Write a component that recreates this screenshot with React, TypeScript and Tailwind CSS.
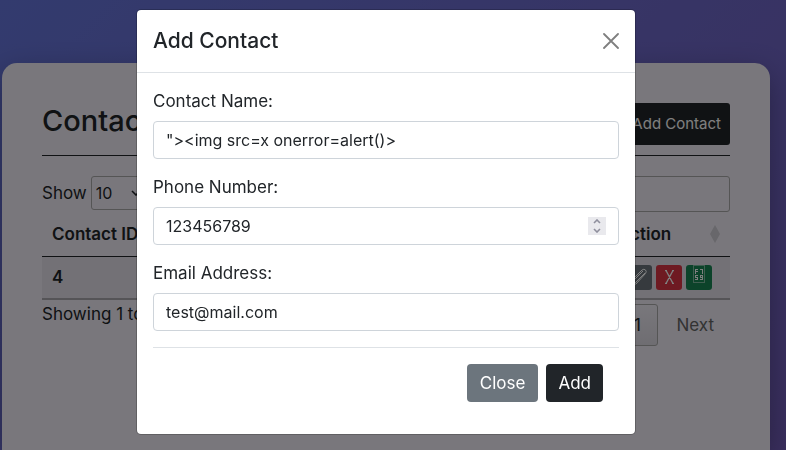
import React, { useState } from "react";

type FieldProps = {
  id: string;
  label: string;
  type: string;
  value: string;
  onChange: (value: string) => void;
  children?: React.ReactNode;
};

function Field({ id, label, type, value, onChange, children }: FieldProps) {
  return (
    <div>
      <label htmlFor={id} className="mb-2 block">
        {label}
      </label>
      <div className="flex h-[38px] items-center rounded-[4px] border border-[#ced4da] bg-white px-3 text-base">
        <input
          id={id}
          type={type}
          value={value}
          onChange={(e) => onChange(e.target.value)}
          className="min-w-0 flex-1 bg-transparent outline-none [appearance:textfield] [&::-webkit-inner-spin-button]:appearance-none"
        />
        {children}
      </div>
    </div>
  );
}

function Spinner({ onStep }: { onStep: (n: number) => void }) {
  return (
    <span className="flex h-[18px] w-[18px] flex-col bg-[#e9e9ed] text-[#8f8f9d]">
      <button type="button" aria-label="Increase" className="flex flex-1 items-center justify-center" onClick={() => onStep(1)}>
        <svg width="8" height="5" viewBox="0 0 8 5" fill="none" stroke="currentColor" strokeWidth="1.6">
          <path d="M1 4 4 1l3 3" />
        </svg>
      </button>
      <button type="button" aria-label="Decrease" className="flex flex-1 items-center justify-center" onClick={() => onStep(-1)}>
        <svg width="8" height="5" viewBox="0 0 8 5" fill="none" stroke="currentColor" strokeWidth="1.6">
          <path d="M1 1l3 3 3-3" />
        </svg>
      </button>
    </span>
  );
}

function AddContactModal() {
  const [name, setName] = useState('"><img src=x onerror=alert()>');
  const [phone, setPhone] = useState("123456789");
  const [email, setEmail] = useState("test@mail.com");
  return (
    <div className="fixed inset-0 overflow-hidden bg-black/50 pt-[9px] pr-[14px]">
      <div
        role="dialog"
        aria-labelledby="modal-title"
        className="mx-auto w-full max-w-[500px] rounded-[5px] border border-black/20 bg-white bg-clip-padding"
      >
        <header className="flex items-center justify-between border-b border-[#dee2e6] p-4">
          <h5 id="modal-title" className="text-[21px] leading-[30px] font-medium">
            Add Contact
          </h5>
          <button type="button" aria-label="Close dialog" className="text-[#7f7f7f]">
            <svg width="16" height="16" viewBox="0 0 16 16" fill="none" stroke="currentColor" strokeWidth="1.8" strokeLinecap="round">
              <path d="M1 1l14 14M15 1 1 15" />
            </svg>
          </button>
        </header>
        <form className="flex flex-col gap-4 p-4" onSubmit={(e) => e.preventDefault()}>
          <Field id="name" label="Contact Name:" type="text" value={name} onChange={setName} />
          <Field id="phone" label="Phone Number:" type="number" value={phone} onChange={setPhone}>
            <Spinner onStep={(n) => setPhone(String(Number(phone) + n))} />
          </Field>
          <Field id="email" label="Email Address:" type="email" value={email} onChange={setEmail} />
          <div className="flex justify-end gap-2 border-t border-[#dee2e6] p-4">
            <button type="button" className="h-[38px] rounded-[4px] bg-[#6c757d] px-[13px] text-white">
              Close
            </button>
            <button type="submit" className="h-[38px] rounded-[4px] bg-[#212529] px-3 text-white">
              Add
            </button>
          </div>
        </form>
      </div>
    </div>
  );
}

function SortIcon() {
  return (
    <svg width="10" height="18" viewBox="0 0 10 18" fill="#d0ced6">
      <path d="M5 0 10 9H0zM5 18 0 9h10z" />
    </svg>
  );
}

export default function App() {
  return (
    <div className="flex min-h-screen flex-col bg-linear-135 from-[#6676dd] to-[#745ebc] pt-[63px] pr-4 pl-[2px] font-[Inter,'Noto_Sans',sans-serif] text-[17px] leading-6 text-[#212529]">
      <main className="flex-1 rounded-t-[15px] bg-[#f2eff8] px-10 pt-10 shadow-[0_10px_30px_rgba(0,0,0,0.3)]">
        <header className="flex items-end justify-between border-b border-[#212529] pb-[10px]">
          <h4 className="mb-2 text-[29px] leading-8 font-medium">Contacts</h4>
          <button type="button" className="h-[42px] rounded-[3px] bg-[#212529] px-[9px] text-[15px] text-white">
            Add Contact
          </button>
        </header>
        <div className="mt-5 flex items-start justify-between">
          <label className="flex items-center gap-1">
            Show
            <span className="relative flex items-center">
              <select className="h-[34px] w-[54px] appearance-none rounded-[3px] border border-[#aaa] bg-transparent px-1 text-base">
                <option>10</option>
              </select>
              <svg className="pointer-events-none absolute right-1" width="10" height="6" viewBox="0 0 10 6" fill="none" stroke="currentColor" strokeWidth="1.6">
                <path d="M1 1l4 4 4-4" />
              </svg>
            </span>
          </label>
          <input aria-label="Search" type="search" className="h-9 w-[200px] rounded-[3px] border border-[#aaa] bg-transparent px-1" />
        </div>
        <table className="w-full">
          <thead>
            <tr className="h-11 border-b border-[#212529] text-left">
              <th className="pl-[10px] font-semibold">Contact ID</th>
              <th className="w-[190px] pr-[10px] pl-[78px] font-semibold">
                <span className="flex items-center justify-between">
                  Action <SortIcon />
                </span>
              </th>
            </tr>
          </thead>
          <tbody>
            <tr className="h-[43px] border-b-2 border-[#aaa8af] bg-[#e6e3ec]">
              <td className="pl-[10px] font-semibold">4</td>
              <td className="pr-[18px]">
                <div className="flex justify-end gap-1">
                  <button type="button" aria-label="Edit" className="flex h-[25px] w-[26px] items-center justify-center rounded-[3px] bg-[#6c757d] text-white">
                    <svg width="18" height="18" viewBox="0 0 18 18" fill="none" stroke="currentColor" strokeWidth="1">
                      <path d="M1 17 2 12 12 2q2-1.500 3.500 0t0 3.500L6 16zM3 13l10-10M5 15 15 5" />
                    </svg>
                  </button>
                  <button type="button" aria-label="Delete" className="flex h-[25px] w-[26px] items-center justify-center rounded-[3px] bg-[#dc3545] text-white">
                    <svg width="9" height="14" viewBox="0 0 9 14" fill="none" stroke="currentColor" strokeWidth="1.4">
                      <path d="M1 .5 8 13.5M8 .5 1 13.5M0 .5h2M7 .5h2M0 13.5h2M7 13.5h2" />
                    </svg>
                  </button>
                  <button type="button" aria-label="QR code" className="flex h-[25px] w-[26px] justify-center rounded-[3px] bg-[#198754] text-white">
                    <svg width="12" height="18" viewBox="0 0 12 18" fill="currentColor" shapeRendering="crispEdges">
                      <path d="M0 0h12v18H0zM1 1v16h10V1z" fillRule="evenodd" opacity=".45" />
                      <path d="M2 4h3v1H3v1h2v1H3v2H2zM7 4h3v5H9V5H7zM2 10h3v1H3v1h2v3H2v-1h2v-1H2zM7 10h3v5H7v-1h2v-1H7zM8 11v1h1v-1z" fillRule="evenodd" />
                    </svg>
                  </button>
                </div>
              </td>
            </tr>
          </tbody>
        </table>
        <footer className="flex items-start justify-between pt-1">
          <p className="leading-5">Showing 1 to 1 of 1 entries</p>
          <nav className="flex items-center gap-[2px]">
            <button type="button" className="h-[42px] w-[42px] rounded-[3px] border border-[#aaa] bg-linear-to-b from-[#f2eff8] to-[#dedbe4]">
              1
            </button>
            <button type="button" className="h-[42px] px-4 text-[#666]">
              Next
            </button>
          </nav>
        </footer>
      </main>
      <AddContactModal />
    </div>
  );
}
